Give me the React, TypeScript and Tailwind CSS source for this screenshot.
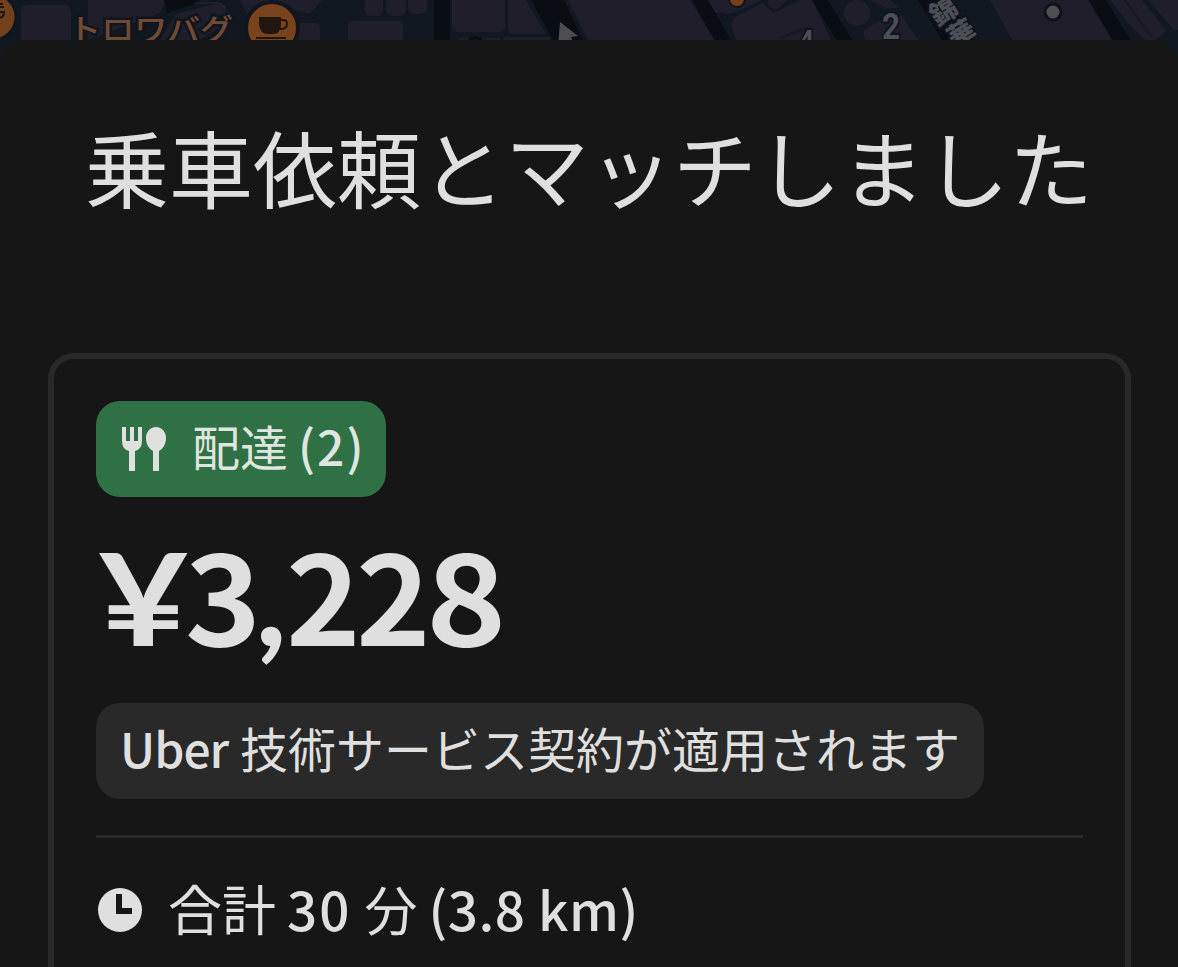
import React from "react";

const MapStrip: React.FC = () => (
  <svg className="block h-16 w-full" viewBox="0 0 1178 64" fill="none">
    <rect width="1178" height="64" fill="#121820" />
    {/* blocks */}
    <g fill="#1f1e2a">
      <rect x="21" y="5" width="50" height="50" rx="6" />
      <path d="M88 0H166L160 13L88 40Z" />
      <path d="M176 14L218 3L226 6L226 24L200 40H160Z" />
      <path d="M240 0H322L310 14L288 8L250 20Z" />
      <rect x="296" y="23" width="24" height="30" rx="5" />
      <rect x="348" y="21" width="55" height="40" rx="5" />
      <rect x="365" y="-14" width="18" height="30" rx="6" />
      <rect x="386" y="-14" width="20" height="30" rx="6" />
      <rect x="408" y="-14" width="19" height="28" rx="6" />
      <rect x="452" y="-10" width="53" height="42" rx="6" />
      <path d="M508 0H526L546 34H514Q508 34 508 28Z" />
      <path d="M458 38H500V50H458ZM504 37H550V50H504Z" fill="#19202a" />
      <path d="M568 0H690L714 40H588Z" />
      <path d="M703 0H762L752 5L730 14L712 12Z" />
      <path d="M768 0H788L776 10L768 6Z" />
      <path d="M731 24L735 17L762 3L774 13L800 0L812 0L830 38V48H738Z" />
      <circle cx="857" cy="13" r="13" />
      <path d="M870 0H890L899 8L886 8Z" />
      <path d="M863 30L892 14L902 16L918 40H865Z" />
      <path d="M990 0H1088L1112 40H1012Z" />
      <path d="M1110 0H1142L1166 30L1156 40H1146Q1134 32 1110 0Z" />
      <path d="M1148 0H1178V30H1174Z" />
    </g>
    <path d="M168 0L168 12L193 3L220 3L225 8" stroke="#292938" />
    <path d="M1125 0L1152 38M780 38L812 26" stroke="#151a24" strokeWidth="2" />
    {/* streets */}
    <g fill="#0a0e14">
      <path d="M434 0H450V40H434Z" />
      <path d="M531 0H564L588 50H558Z" />
      <path d="M692 0H708L737 50H720Z" />
      <path d="M812 0H828L858 50H842Z" />
      <path d="M918 0H948L982 50H948Z" />
      <path d="M1089 0H1106L1137 50H1118Z" />
      <path d="M164 0H200L192 5L167 13Z" />
    </g>
    {/* cafe labels */}
    <circle cx="-7" cy="17" r="23" fill="#71401c" stroke="#101520" strokeWidth="3" />
    <path d="M-2 12H4Q4 18 -2 18M-2 4H3M-2 7H4" stroke="#21150f" strokeWidth="2" />
    <text x="68" y="41" fontSize="31" fontWeight="500" fontFamily="Noto Sans CJK JP, sans-serif" textLength="165" lengthAdjust="spacingAndGlyphs" fill="#714b31" stroke="#101520" strokeWidth="5" paintOrder="stroke">
      トロワバグ
    </text>
    <circle cx="272" cy="28" r="26" fill="#79431d" stroke="#101520" strokeWidth="4" />
    <path d="M259 17H281V24Q281 34 273 34H268Q260 34 259 24Z" fill="#21150f" />
    <path d="M280 20H283Q287 20 287 24Q287 29 280 29M256 38H286" stroke="#21150f" strokeWidth="2" />
    <circle cx="737" cy="-1" r="8" fill="#793f17" stroke="#101520" strokeWidth="2" />
    <path d="M560 22L578 36L571 37L574 46H558Z" fill="#4d4e50" />
    <path d="M469 40Q475 36 482 40" stroke="#0a0e14" strokeWidth="3" />
    <g fill="#4c4e55" stroke="#10131b" strokeWidth="4" paintOrder="stroke" fontWeight="700">
      <text x="799" y="51" fontSize="30" fontFamily="Roboto, sans-serif" textLength="15" lengthAdjust="spacingAndGlyphs">4</text>
      <text x="882" y="39" fontSize="36" fontFamily="Roboto, sans-serif" textLength="18" lengthAdjust="spacingAndGlyphs">2</text>
      <g fontSize="27" fontWeight="900" fontFamily="Noto Sans CJK JP, sans-serif" textAnchor="middle">
        <text transform="translate(944 12) rotate(-32)" y="9">錦</text>
        <text transform="translate(962 34) rotate(-32)" y="9">華</text>
      </g>
    </g>
    <circle cx="1053" cy="12" r="8" fill="#4d4e51" stroke="#10131b" strokeWidth="3" />
  </svg>
);

const UtensilsIcon: React.FC = () => (
  <svg className="h-12 w-12 shrink-0" viewBox="0 0 48 48" fill="#dfe1df">
    <path d="M2 2H6V16H10V2H14V16H18V2H22V16Q22 24 15 26V46H9V26Q2 24 2 16Z" />
    <path d="M36 2C42 2 46 7 46 13C46 19 43 24 39 26V46H33V26C29 24 26 19 26 13C26 7 30 2 36 2Z" />
  </svg>
);

const ClockIcon: React.FC = () => (
  <svg className="h-12 w-12 shrink-0" viewBox="0 0 48 48">
    <circle cx="24" cy="24" r="22" fill="#dfdfdf" />
    <path d="M20 8H26V22H36V28H20Z" fill="#161616" />
  </svg>
);

// tight display figures, each with its own advance
const price: { char: string; className: string }[] = [
  { char: "¥", className: "w-[87px] scale-x-[1.22] font-['Lato',sans-serif] text-[128px]" },
  { char: "3", className: "w-[71px] scale-x-[1.04]" },
  { char: ",", className: "w-[30px] font-['Lato',sans-serif] text-[128px] font-black" },
  { char: "2", className: "w-[70px] scale-x-[1.02]" },
  { char: "2", className: "w-[70px] scale-x-[1.02]" },
  { char: "8", className: "w-[74px] scale-x-[1.1]" },
];

const App: React.FC = () => {
  return (
    <div
      lang="ja"
      className="flex h-[967px] w-full flex-col overflow-hidden bg-[#121820] font-['Noto_Sans_CJK_JP',sans-serif] text-[#dfdfdf]"
    >
      <MapStrip />
      <main className="relative -mt-6 h-[927px] shrink-0 rounded-t-[24px] bg-[#161616] px-12">
        <h1 className="h-[313px] whitespace-nowrap pt-[66px] pl-[37px] text-[84px] leading-[120px] font-normal">
          乗車依頼とマッチしました
        </h1>
        <section className="h-[700px] w-[1083px] rounded-[26px] border-6 border-[#292929] px-[42px] pt-[42px]">
          <div className="flex h-24 w-[290px] items-center rounded-[24px] bg-[#307045] pl-6 text-[48px] leading-none text-[#dfe5df]">
            <UtensilsIcon />
            <span className="ml-6 pb-2">配達</span>
            <span className="ml-[10px] pb-2 font-medium tracking-[2px]">(2)</span>
          </div>
          <div className="mt-[29px] flex h-[132px] items-baseline whitespace-nowrap pl-0.5 text-[124px] leading-[132px] font-bold">
            {price.map((p, i) => (
              <span key={i} className={`shrink-0 origin-left ${p.className}`}>
                {p.char}
              </span>
            ))}
          </div>
          <div className="mt-[45px] flex h-24 w-[888px] items-center whitespace-nowrap rounded-[24px] bg-[#292929] pb-2 pl-6 text-[48px] leading-none">
            <span className="w-[120px] shrink-0 font-medium tracking-[-1px]">Uber</span>
            <span>技術サービス契約が適用されます</span>
          </div>
          <hr className="mt-9 w-[987px] border-t-3 border-[#292929]" />
          <div className="mt-[38px] flex h-[68px] items-center whitespace-nowrap text-[53px] leading-none">
            <ClockIcon />
            <div className="flex items-baseline pb-1">
              <span className="ml-6 text-[54px]">合計</span>
              <span className="ml-[11px] font-medium tracking-[2px]">30</span>
              <span className="ml-[13px]">分</span>
              <span className="ml-[11px] font-medium tracking-[0.5px]">(3.8 km)</span>
            </div>
          </div>
        </section>
      </main>
    </div>
  );
};

export default App;
